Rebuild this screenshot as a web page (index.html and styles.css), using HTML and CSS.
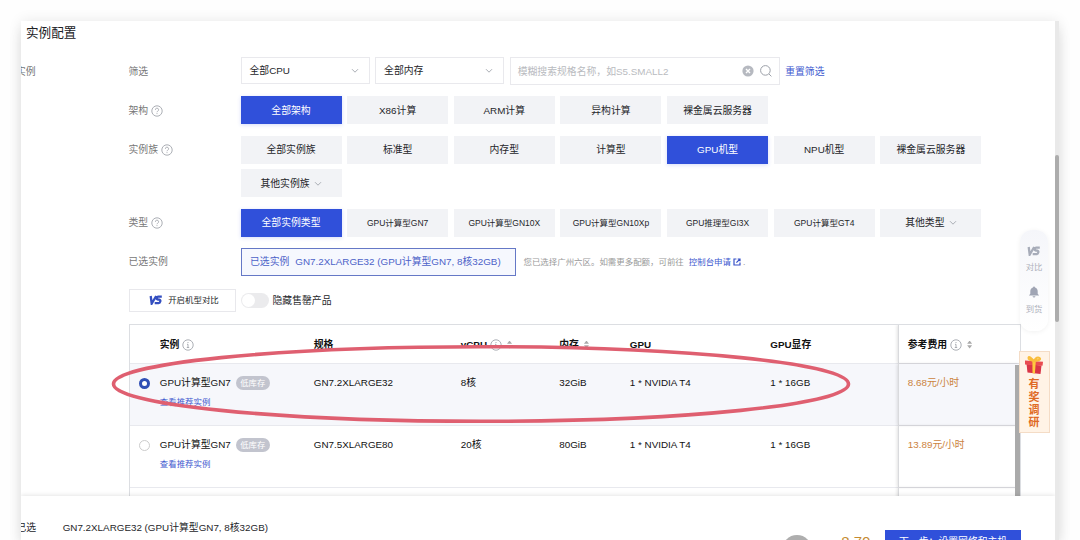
FILE: index.html
```html
<!DOCTYPE html>
<html>
<head>
<meta charset="utf-8">
<title>实例配置</title>
<link rel="stylesheet" href="styles.css">
</head>
<body>
<svg class="defs" width="0" height="0">
  <symbol id="help" viewBox="0 0 12 12"><circle cx="6" cy="6" r="5.2"/><path d="M4.4 4.8a1.6 1.6 0 1 1 2.3 1.4q-.7.3-.7 1M6 8.2v.9"/></symbol>
  <symbol id="info" viewBox="0 0 12 12"><circle cx="6" cy="6" r="5.2"/><path d="M6 3v1M5 5.3h1v3.2M4.8 8.5h2.4"/></symbol>
  <symbol id="chev" viewBox="0 0 8 6"><path d="M1 1.2l3 3 3-3"/></symbol>
  <symbol id="vs" viewBox="0 0 14 10"><path d="M1.7 1l1 7.6L7.2 1M12.8 1.7H9.2q-1.2 0-1.4 1.4-.2 1.3 1 1.4l1.6.2q1.2.2.9 1.7-.3 1.7-1.7 1.7H5.7"/></symbol>
</svg>
<div class="window">
  <main class="panel">
    <h1 class="title">实例配置</h1>
    <div class="side-label">实例</div>
    <section class="filters">
      <div class="row row-filter">
        <div class="label">筛选</div>
        <div class="select">全部CPU<svg class="chev"><use href="#chev"/></svg></div>
        <div class="select">全部内存<svg class="chev"><use href="#chev"/></svg></div>
        <div class="search"><span>模糊搜索规格名称，如S5.SMALL2</span>
          <svg class="clear" viewBox="0 0 12 12"><circle cx="6" cy="6" r="5.6"/><path d="M4 4l4 4M8 4l-4 4"/></svg>
          <svg class="glass" viewBox="0 0 12 12"><circle cx="5.4" cy="5.4" r="4.8"/><path d="M9 9l2.4 2.4"/></svg>
        </div>
        <a class="reset">重置筛选</a>
      </div>
      <div class="row">
        <div class="label">架构<svg class="tip"><use href="#help"/></svg></div>
        <div class="options">
          <div class="opt on">全部架构</div><div class="opt">X86计算</div><div class="opt">ARM计算</div><div class="opt">异构计算</div><div class="opt">裸金属云服务器</div>
        </div>
      </div>
      <div class="row">
        <div class="label">实例族<svg class="tip"><use href="#help"/></svg></div>
        <div class="options">
          <div class="opt">全部实例族</div><div class="opt">标准型</div><div class="opt">内存型</div><div class="opt">计算型</div><div class="opt on">GPU机型</div><div class="opt">NPU机型</div><div class="opt">裸金属云服务器</div>
          <div class="opt">其他实例族<svg class="chev"><use href="#chev"/></svg></div>
        </div>
      </div>
      <div class="row">
        <div class="label">类型<svg class="tip"><use href="#help"/></svg></div>
        <div class="options">
          <div class="opt on">全部实例类型</div><div class="opt small">GPU计算型GN7</div><div class="opt small">GPU计算型GN10X</div><div class="opt small">GPU计算型GN10Xp</div><div class="opt small">GPU推理型GI3X</div><div class="opt small">GPU计算型GT4</div><div class="opt">其他类型<svg class="chev"><use href="#chev"/></svg></div>
        </div>
      </div>
      <div class="row">
        <div class="label">已选实例</div>
        <div class="chosen"><span>已选实例</span><span>GN7.2XLARGE32 (GPU计算型GN7, 8核32GB)</span></div>
        <div class="note"><span>您已选择广州六区。如需更多配额，可前往</span><a>控制台申请</a><svg class="ext" viewBox="0 0 8 8"><path d="M3.4 1H1v6h6V4.6M4.7 1H7v2.3M7 1L3.4 4.6"/></svg><span>.</span></div>
      </div>
    </section>
    <div class="tools">
      <div class="compare"><svg class="vs"><use href="#vs"/></svg>开启机型对比</div>
      <div class="switch"><i></i></div>
      <span class="switch-text">隐藏售罄产品</span>
    </div>
    <section class="table">
      <div class="tr head">
        <div class="c-name">实例<svg class="tip"><use href="#info"/></svg></div><div>规格</div><div>vCPU<svg class="tip"><use href="#info"/></svg><i class="sort"></i></div><div>内存<i class="sort"></i></div><div>GPU</div><div>GPU显存</div>
        <div class="c-price">参考费用<svg class="tip"><use href="#info"/></svg><i class="sort"></i></div>
      </div>
      <div class="tr active">
        <i class="radio"></i><div class="c-name"><p>GPU计算型GN7<b>低库存</b></p><a>查看推荐实例</a></div><div>GN7.2XLARGE32</div><div>8核</div><div>32GiB</div><div>1 * NVIDIA T4</div><div>1 * 16GB</div><div class="c-price">8.68元/小时</div>
      </div>
      <div class="tr">
        <i class="radio"></i><div class="c-name"><p>GPU计算型GN7<b>低库存</b></p><a>查看推荐实例</a></div><div>GN7.5XLARGE80</div><div>20核</div><div>80GiB</div><div>1 * NVIDIA T4</div><div>1 * 16GB</div><div class="c-price">13.89元/小时</div>
      </div>
      <div class="tr last"><div class="c-price"></div></div>
      <i class="table-scroll"></i>
    </section>
    <footer class="footer">
      <span class="picked">已选</span><span class="spec">GN7.2XLARGE32 (GPU计算型GN7, 8核32GB)</span>
      <i class="dot"></i><span class="price">8.70<small>元</small></span>
      <div class="next">下一步：设置网络和主机</div>
    </footer>
  </main>
  <div class="page-scroll"><i></i></div>
</div>
<aside class="float">
  <svg class="vs"><use href="#vs"/></svg><span>对比</span>
  <svg class="bell" viewBox="0 0 12 12"><path d="M6 .5c.6 0 1 .3 1 .9 1.800.5 2.700 2 2.700 3.800v2.600l1.400 1.700H.9l1.400-1.700V5.200c0-1.800.9-3.300 2.700-3.800 0-.6.4-.9 1-.9zM4.500 10.300h3q-.3 1.300-1.500 1.300t-1.500-1.300z"/></svg><span>到货</span>
</aside>
<aside class="survey">
  <svg viewBox="0 0 20 20"><path fill="#d93547" d="M2.500 9l15 1.500-1 8.500-13-1.500z"/><path fill="#e94b50" d="M1 5.500l18 1.300-.5 4L1 9.500z"/><path fill="#ffc93f" d="M8.400 6l3.400.3-.9 12.200-2.400-.3z"/><path fill="none" stroke="#f9bd3c" stroke-width="2" d="M10 6Q4 5 4.500 2.700T10 6q3-5 5.500-3T10 6z"/></svg>
  <span>有</span><span>奖</span><span>调</span><span>研</span>
</aside>
<svg class="mark" viewBox="0 0 740 80"><ellipse cx="370" cy="40" rx="367.500" ry="37.300"/></svg>
</body>
</html>
```
FILE: styles.css
```css
* { box-sizing: border-box; }
body { margin: 0; width: 1080px; height: 540px; overflow: hidden; position: relative; background: #fefefe; color: #25262a; font: 9.84px/14px "Liberation Sans", "Noto Sans CJK SC", sans-serif; }
p, h1 { margin: 0; }
svg { fill: none; stroke: #9ca0a8; stroke-width: 1; flex: none; }
a { color: #4059cf; }
.defs { position: absolute; }
.window { display: flex; width: 1038px; height: 519px; margin: 21px 0 0 21px; border-radius: 0 3px 0 0; box-shadow: 0 10px 14px rgba(0,0,0,.08), 0 0 14px rgba(0,0,0,.09); }
.panel { width: 1034px; height: 519px; background: #fff; position: relative; overflow: hidden; display: flex; flex-direction: column; }
.page-scroll { width: 4px; background: #e9e9e9; padding-top: 134px; }
.page-scroll i { display: block; height: 167px; background: #acacac; border-radius: 2px; }
.title { font-size: 12.6px; font-weight: 400; line-height: 18px; padding: 3px 0 0 5px; height: 36px; flex: none; color: #202124; }
.side-label { position: absolute; left: -5px; top: 44px; color: #777; }
.filters { display: flex; flex-direction: column; gap: 11.4px; padding-left: 107.5px; }
.row { display: flex; align-items: flex-start; }
.label { width: 112px; height: 28px; padding-top: 1px; display: flex; align-items: center; color: #777; }
.tip { width: 12px; height: 12px; margin-left: 3px; stroke: #a3a6ad; stroke-width: .9; }
.select { width: 129px; height: 27px; margin-right: 5.6px; border: 1px solid #e9e9ed; padding: 1px 10px 0 8px; display: flex; align-items: center; justify-content: space-between; }
.chev { width: 8px; height: 6px; stroke: #aaaeb5; }
.search { width: 270px; height: 28px; border: 1px solid #e9e9ed; padding: 0 7px 0 7px; display: flex; align-items: center; color: #b9bbc0; }
.search span { flex: 1; padding-top: 1px; }
.clear { width: 12px; height: 12px; fill: #b6b9c0; stroke: none; }
.clear path { stroke: #fff; stroke-width: 1.4; }
.glass { width: 12px; height: 12px; margin-left: 6px; }
.reset { margin-left: 5.5px; padding-top: 1px; height: 28px; line-height: 27px; }
.options { display: grid; grid-template-columns: repeat(7, 101px); column-gap: 5.65px; row-gap: 5.4px; }
.opt { height: 28px; background: #f2f3f6; padding-top: 1px; display: flex; align-items: center; justify-content: center; white-space: nowrap; }
.opt .chev { margin-left: 4px; }
.opt.small { font-size: 8.5px; }
.opt.on { background: #3050da; color: #fff; box-shadow: 0 1px 4px rgba(48,80,218,.2); }
.chosen { width: 275px; height: 28px; border: 1px solid #6578c6; background: #f6f8fe; color: #4c62c8; padding-left: 8.5px; display: flex; align-items: center; gap: 6px; white-space: nowrap; }
.note { height: 28px; margin-left: 8px; padding-top: 1px; display: flex; align-items: center; font-size: 8.45px; color: #999; white-space: nowrap; }
.note a { margin-left: 5px; }
.ext { width: 8px; height: 8px; margin: 0 2px; stroke: #3852c8; stroke-width: 1.2; }
.tools { display: flex; align-items: center; height: 23px; flex: none; margin: 13px 0 0 107.5px; }
.compare { width: 107px; height: 23px; border: 1px solid #e8e8ec; font-size: 8.45px; display: flex; align-items: center; justify-content: center; gap: 5px; padding-left: 4px; }
.vs { width: 14px; height: 10px; stroke: #344fc0; stroke-width: 2.3; }
.switch { width: 28px; height: 15px; background: #ebebed; border-radius: 8px; margin: 0 3.5px 0 5.5px; padding: 1px; }
.switch i { display: block; width: 13px; height: 13px; border-radius: 50%; background: #fff; }
.switch-text { padding-top: 1px; }
.table { position: relative; flex: none; width: 892px; margin: 11.6px 0 0 107.8px; height: 174px; border: solid #dcdee2; border-width: 1px 1px 0; overflow: hidden; }
.tr { display: grid; grid-template-columns: 184px 147px 98.5px 70.5px 140.5px 129px 121px; height: 62px; border-bottom: 1px solid #e8e9ee; color: #111; position: relative; }
.tr > div { padding-top: 12px; white-space: nowrap; }
.tr.head { height: 39px; font-weight: 700; }
.tr.head > div { display: flex; align-items: center; padding-top: 2px; }
.tr.active { background: #f6f7fb; }
.tr > .c-name { padding-left: 30px; }
.tr > .c-price { grid-column: 7; margin-left: -1px; border-left: 1px solid #d9dadd; padding-left: 8.5px; color: #cb833e; box-shadow: -1px 0 3px rgba(0,0,0,.12); }
.head > .c-price { color: #111; }
.c-name p { display: flex; align-items: center; }
.c-name b { width: 34px; height: 14px; margin-left: 5px; background: #c2c4ce; color: #fff; border-radius: 7px; font-weight: 400; font-size: 8.4px; text-align: center; }
.c-name a { display: block; font-size: 8.45px; margin-top: 5.5px; }
.radio { position: absolute; left: 9px; top: 14px; width: 11px; height: 11px; border-radius: 50%; border: 1px solid #ccc; background: #fff; }
.active .radio { border: 3px solid #304fb5; }
.sort { margin-left: 5px; width: 5px; height: 8px; background: #aaa; clip-path: polygon(50% 0,100% 40%,0 40%,0 60%,100% 60%,50% 100%,0 60%,0 40%); }
.table-scroll { position: absolute; right: 0; top: 40px; width: 5px; height: 140px; background: #aaa; }
.footer { position: absolute; left: 0; right: 0; top: 475px; height: 44px; overflow: hidden; background: #fff; display: flex; align-items: flex-start; white-space: nowrap; box-shadow: 0 -1px 4px rgba(0,0,0,.1); }
.picked { margin: 25px 0 0 -4.5px; }
.spec { margin: 25px 0 0 26.5px; width: 719px; }
.dot { width: 30px; height: 30px; margin-top: 39px; border-radius: 50%; background: #aeaeae; flex: none; }
.price { margin: 37px 0 0 29.5px; width: 44px; font-size: 15px; line-height: 18px; color: #c58b32; flex: none; }
.price small { font-size: 8px; margin-left: 2px; }
.next { width: 136px; height: 30px; margin-top: 34px; background: #3050da; color: #fff; text-align: center; line-height: 24px; flex: none; }
.float { position: absolute; left: 1020px; top: 230px; width: 28px; height: 101px; border-radius: 12px; background: linear-gradient(#f5f6fa, #fff); box-shadow: 0 1px 5px rgba(0,0,0,.06); display: flex; flex-direction: column; align-items: center; padding-top: 16px; font-size: 8.4px; color: #aeb1bb; }
.float .vs { stroke: #a7acb9; margin-bottom: 4px; }
.bell { width: 12px; height: 12px; fill: #a0a5b4; stroke: none; margin: 12px 0 4px; }
.survey { position: absolute; left: 1018.5px; top: 351px; width: 31px; height: 82px; background: #fff3e6; border: 1px solid #f4dcc6; display: flex; flex-direction: column; align-items: center; font-size: 11px; font-weight: 700; line-height: 12.8px; color: #df6a25; }
.survey svg { width: 20px; height: 20px; margin: 3px 0 3px; stroke: none; }
.mark { position: absolute; left: 111px; top: 343.5px; width: 740px; height: 80px; stroke: #df5f70; stroke-width: 3.6; }
```
